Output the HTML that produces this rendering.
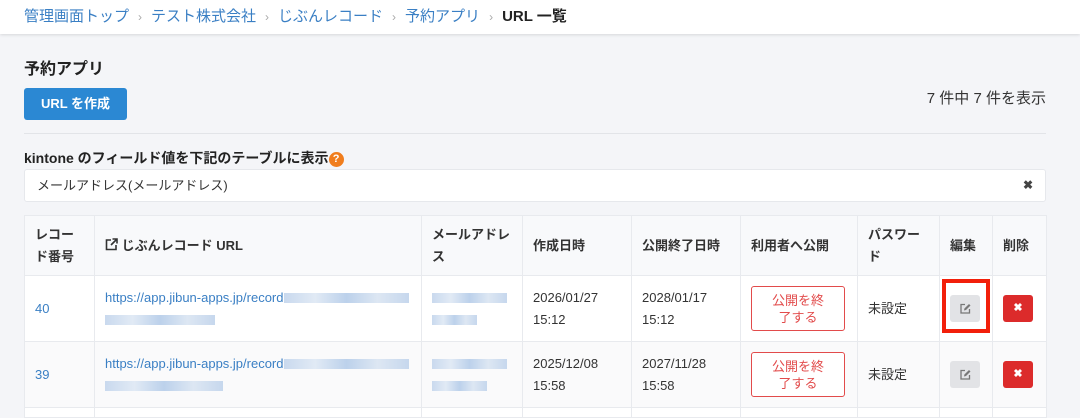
<!DOCTYPE html>
<html><head><meta charset="utf-8">
<style>
*{box-sizing:border-box;margin:0;padding:0}
html{width:1080px;height:418px;overflow:hidden}
body{width:1080px;height:418px;overflow:hidden;background:#f4f5f8;font-family:"Liberation Sans","Noto Sans CJK JP",sans-serif;color:#333;position:relative}
.abs{position:absolute}
.bc{left:0;top:0;width:1080px;height:34px;background:#fff;box-shadow:0 1px 3px rgba(0,0,0,.12);font-size:15px;line-height:34px;padding-left:24px;color:#3a7fc4;white-space:nowrap}
.bc .s{color:#aaa;margin:0 9px;font-size:12px}
.bc b{color:#222}
table{border-collapse:collapse;table-layout:fixed}
td,th{border-right:1px solid #e8eaee;border-bottom:1px solid #e8eaee;font-size:13px;text-align:left;vertical-align:middle;padding:0 10px;line-height:22px}
th{background:#f8f9fb;font-weight:bold;color:#333;height:60px}
tr.r td{height:66px;background:#fff}
tr.r2 td{background:#fafafb}
tr.last td{height:10px;background:#fff}
.lnk{color:#3a7fc4}
.blur{display:inline-block;height:10px;background:linear-gradient(90deg,#c9d9ee,#e1eaf5,#bcd1eb,#dde7f3,#c6d7ed);vertical-align:middle}
.pub{display:block;width:94px;height:45px;border:1px solid #e24b4b;border-radius:3px;color:#e24b4b;text-align:center;font-size:13px;line-height:17px;padding-top:5px;background:#fff}
.ed,.del{display:flex;align-items:center;justify-content:center;width:30px;height:27px;border-radius:3px}
.ed{background:#e2e3e6}
.del{background:#dc2b2b;color:#fff;font-size:11px;font-weight:bold;line-height:1}
</style></head><body>
<div class="abs bc">管理画面トップ<span class="s">›</span>テスト株式会社<span class="s">›</span>じぶんレコード<span class="s">›</span>予約アプリ<span class="s">›</span><b>URL 一覧</b></div>
<div class="abs" style="left:24px;top:55px;font-size:16px;font-weight:bold;color:#222">予約アプリ</div>
<div class="abs" style="left:24px;top:88px;width:103px;height:32px;background:#2b88d3;border-radius:3px;color:#fff;font-size:13px;font-weight:bold;text-align:center;line-height:32px">URL を作成</div>
<div class="abs" style="right:34px;top:87px;font-size:15px;color:#333">7 件中 7 件を表示</div>
<div class="abs" style="left:24px;top:133px;width:1022px;height:1px;background:#e2e4e8"></div>
<div class="abs" style="left:24px;top:148px;font-size:14px;font-weight:bold;color:#222">kintone のフィールド値を下記のテーブルに表示<span style="display:inline-block;width:15px;height:15px;border-radius:50%;background:#f07d1d;color:#fff;font-size:11px;text-align:center;line-height:15px;vertical-align:1px">?</span></div>
<div class="abs" style="left:24px;top:169px;width:1022px;height:33px;background:#fff;border:1px solid #e6e8ec;border-radius:3px;font-size:13px;line-height:31px;padding-left:12px;color:#333">メールアドレス(メールアドレス)<span style="position:absolute;right:12px;top:0;font-weight:bold;color:#444;font-size:12px">✖</span></div>
<table class="abs" style="left:24px;top:215px;width:1022px;border:1px solid #e8eaee">
<colgroup><col style="width:70px"><col style="width:327px"><col style="width:101px"><col style="width:109px"><col style="width:109px"><col style="width:117px"><col style="width:82px"><col style="width:53px"><col style="width:54px"></colgroup>
<tr><th>レコー<br>ド番号</th><th><svg width="13" height="13" viewBox="0 0 13 13" style="vertical-align:-1px"><path d="M6 2H1.5v9.5H11V7" fill="none" stroke="#333" stroke-width="1.6"/><path d="M7.5 1H12v4.5M12 1L6 7" fill="none" stroke="#333" stroke-width="1.6"/></svg> じぶんレコード URL</th><th>メールアドレ<br>ス</th><th>作成日時</th><th>公開終了日時</th><th>利用者へ公開</th><th>パスワー<br>ド</th><th>編集</th><th>削除</th></tr>
<tr class="r"><td class="lnk">40</td><td><span class="lnk">https://app.jibun-apps.jp/record</span><span class="blur" style="width:125px"></span><br><span class="blur" style="width:110px"></span></td><td><span class="blur" style="width:75px"></span><br><span class="blur" style="width:45px"></span></td><td>2026/01/27<br>15:12</td><td>2028/01/17<br>15:12</td><td><span class="pub">公開を終<br>了する</span></td><td>未設定</td><td><span class="ed"><svg width="11" height="11" viewBox="0 0 11 11"><path d="M5 1.5H1v8.5h8.5V6" fill="none" stroke="#777" stroke-width="1.3"/><path d="M4 7.5l.4-2L9 1l1.5 1.5L6 7z" fill="#777"/></svg></span></td><td><span class="del">✖</span></td></tr>
<tr class="r r2"><td class="lnk">39</td><td><span class="lnk">https://app.jibun-apps.jp/record</span><span class="blur" style="width:125px"></span><br><span class="blur" style="width:118px"></span></td><td><span class="blur" style="width:75px"></span><br><span class="blur" style="width:55px"></span></td><td>2025/12/08<br>15:58</td><td>2027/11/28<br>15:58</td><td><span class="pub">公開を終<br>了する</span></td><td>未設定</td><td><span class="ed"><svg width="11" height="11" viewBox="0 0 11 11"><path d="M5 1.5H1v8.5h8.5V6" fill="none" stroke="#777" stroke-width="1.3"/><path d="M4 7.5l.4-2L9 1l1.5 1.5L6 7z" fill="#777"/></svg></span></td><td><span class="del">✖</span></td></tr>
<tr class="last"><td></td><td></td><td></td><td></td><td></td><td></td><td></td><td></td><td></td></tr>
</table>
<div class="abs" style="left:942px;top:279px;width:48px;height:54px;border:4px solid #f21f0a"></div>
</body></html>
